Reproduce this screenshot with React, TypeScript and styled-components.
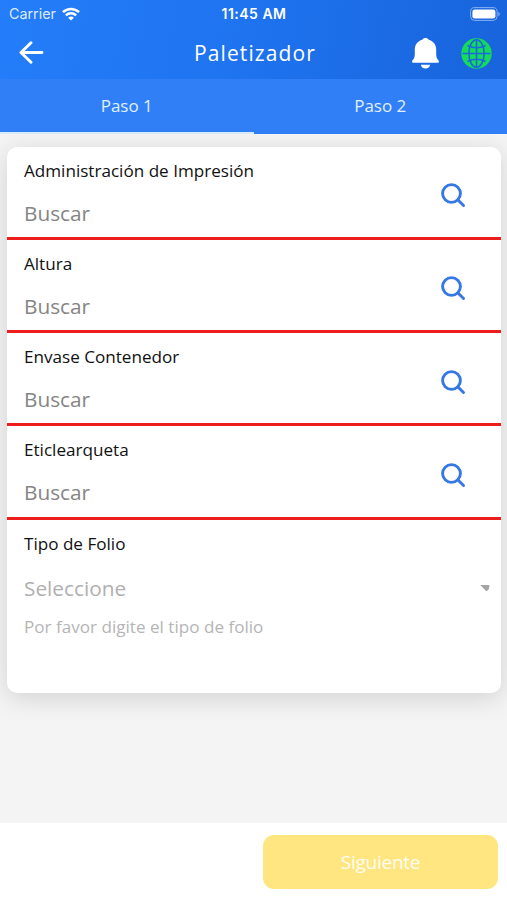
import React from "react";
import styled, { createGlobalStyle } from "styled-components";

const GlobalStyle = createGlobalStyle`
  * { box-sizing: border-box; }
  body { margin: 0; background: #f4f4f4; font-family: "Open Sans", "Noto Sans", sans-serif; }
  button, input { font: inherit; }
`;

const Screen = styled.div`
  width: 507px;
  height: 900px;
  display: flex;
  flex-direction: column;
  overflow: hidden;
  background: #f4f4f4;
`;

const Header = styled.header`
  height: 79px;
  flex: none;
  color: #fff;
  background: linear-gradient(100deg, #247dfa 0%, #1f74f0 45%, #1864dc 100%);
`;

const StatusBar = styled.div`
  height: 27px;
  display: grid;
  grid-template-columns: 1fr auto 1fr;
  align-items: center;
  padding: 0 6px 0 9px;
  font: 14px/27px Inter, sans-serif;
`;

const Carrier = styled.div`
  display: flex;
  align-items: center;
  gap: 6px;
  font-size: 14.3px;
  color: #dceaff;
`;

const Clock = styled.div`
  margin-right: 2px;
  font-size: 14px;
  font-weight: 600;
  letter-spacing: 0.5px;
`;

const Battery = styled.div`
  display: flex;
  justify-content: flex-end;
`;

const NavBar = styled.div`
  height: 52px;
  display: grid;
  grid-template-columns: 1fr auto 1fr;
  align-items: center;
  padding: 0 15px 0 18px;
`;

const Title = styled.h1`
  margin: 0;
  font-size: 21px;
  line-height: 30px;
  font-weight: 450;
  letter-spacing: 1.1px;
`;

const IconButton = styled.button`
  display: flex;
  padding: 0;
  border: 0;
  background: none;
  color: inherit;
`;

const Actions = styled.div`
  display: flex;
  justify-content: flex-end;
  align-items: center;
  gap: 22px;
`;

const Tabs = styled.div`
  display: flex;
  flex: none;
  height: 55px;
  background: #307ff7;
`;

const Tab = styled.button<{ $active?: boolean }>`
  flex: 1;
  border: 0;
  border-bottom: 2px solid ${(p) => (p.$active ? "#d9ecfd" : "#307ff7")};
  padding: 0;
  background: none;
  color: #e2efff;
  font-size: 17px;
`;

const Content = styled.main`
  flex: 1;
  padding: 12.6px 6px 0 7px;
`;

const Card = styled.section`
  height: 546.5px;
  background: #fff;
  border-radius: 10px;
  box-shadow: 0 5px 26px rgba(0, 0, 0, 0.14);
`;

const Field = styled.div`
  height: 93.25px;
  display: flex;
  align-items: center;
  justify-content: space-between;
  padding: 6px 35px 0 17px;
  border-bottom: 3px solid #ee1d1d;
`;

const FieldText = styled.div`
  align-self: flex-start;
`;

const Label = styled.div`
  font-size: 17.1px;
  line-height: 35px;
  color: #111;
`;

const Value = styled.div<{ $color: string }>`
  font-size: 20.8px;
  line-height: 50px;
  color: ${(p) => p.$color};
`;

const SelectField = styled.div`
  padding: 6px 11px 0 17px;
`;

const SelectRow = styled.div`
  display: flex;
  align-items: center;
  justify-content: space-between;
  height: 55px;
`;

const Hint = styled.div`
  font-size: 17.1px;
  line-height: 22px;
  color: #b5b5b5;
`;

const Footer = styled.footer`
  height: 77px;
  flex: none;
  display: flex;
  justify-content: flex-end;
  padding: 12px 9px 0;
  background: #fff;
`;

const NextButton = styled.button`
  width: 235px;
  height: 54px;
  border: 0;
  border-radius: 11px;
  background: #ffe680;
  color: #fffdf2;
  font-size: 19px;
  letter-spacing: -0.25px;
`;

const WifiIcon = () => (
  <svg width="18" height="14" viewBox="0 0 18 14" fill="none" stroke="#fff" strokeWidth="2.5">
    <path d="M1 5.200a11.400 11.400 0 0 1 16 0" />
    <path d="M3.900 8.400a7.300 7.300 0 0 1 10.200 0" />
    <path d="M9 13.600 6.100 10.800a4.200 4.200 0 0 1 5.800 0Z" fill="#fff" stroke="none" />
  </svg>
);

const BatteryIcon = () => (
  <svg width="31" height="14" viewBox="0 0 31 14">
    <rect x=".6" y=".6" width="26.5" height="12.8" rx="4" fill="none" stroke="#86b1f4" />
    <rect x="2.4" y="2.4" width="23" height="9.2" rx="2.4" fill="#fff" />
    <path d="M28.3 4.8c2 .8 2 3.600 0 4.400Z" fill="#86b1f4" />
  </svg>
);

const BackIcon = () => (
  <svg width="27" height="24" viewBox="0 0 27 24" fill="none" stroke="#fff" strokeWidth="2.9" strokeLinecap="round" strokeLinejoin="round">
    <path d="M24 11.500H3M13 1.700 3 11.500l10 9.800" />
  </svg>
);

const BellIcon = () => (
  <svg width="27" height="31" viewBox="0 0 27 31" fill="#fff">
    <path d="M13.500 0c1.500 0 2.600.6 3.200 1.700 4.700 1.300 7.500 5 7.500 9.600v4.400c0 3.200.5 4.700 2.200 6.500.9 1 .6 2.500-.8 2.500h-24.200c-1.400 0-1.700-1.500-.8-2.500 1.700-1.800 2.200-3.300 2.200-6.500v-4.400c0-4.600 2.800-8.300 7.500-9.600.6-1.100 1.700-1.700 3.200-1.700Z" />
    <path d="M8.800 26.800h9.400c-.4 2.300-2.200 3.800-4.700 3.800s-4.300-1.500-4.700-3.800Z" />
  </svg>
);

const GlobeIcon = () => (
  <svg width="31" height="31" viewBox="0 0 31 31">
    <circle cx="15.500" cy="15.500" r="15.200" fill="#16da5c" />
    <g fill="none" stroke="#1a67df" strokeWidth="1.600">
      <path d="M15.500 1.500v28M1.500 15.500h28M6.500 7.500c5.500 2.800 12.500 2.800 18 0M6.500 23.500c5.500-2.800 12.500-2.800 18 0" />
      <ellipse cx="15.500" cy="15.500" rx="7.600" ry="13.800" />
    </g>
  </svg>
);

const SearchIcon = () => (
  <svg width="25" height="25" viewBox="0 0 25 25" fill="none" stroke="#3578e5" strokeWidth="2.900" strokeLinecap="round">
    <circle cx="10.500" cy="11.500" r="8.900" />
    <path d="m17 18 5.500 5.500" />
  </svg>
);

const CaretIcon = () => (
  <svg width="10" height="9" viewBox="0 0 10 9">
    <path d="M.3 1h8.300q1 0 .8 1L8.800 5.200 6.900 7H6Z" fill="#a5a5a5" />
  </svg>
);

const searchFields = ["Administración de Impresión", "Altura", "Envase Contenedor", "Eticlearqueta"];

export default function App() {
  return (
    <Screen>
      <GlobalStyle />
      <Header>
        <StatusBar>
          <Carrier>Carrier <WifiIcon /></Carrier>
          <Clock>11:45 AM</Clock>
          <Battery><BatteryIcon /></Battery>
        </StatusBar>
        <NavBar>
          <IconButton aria-label="Volver"><BackIcon /></IconButton>
          <Title>Paletizador</Title>
          <Actions>
            <IconButton aria-label="Notificaciones"><BellIcon /></IconButton>
            <IconButton aria-label="Idioma"><GlobeIcon /></IconButton>
          </Actions>
        </NavBar>
      </Header>
      <Tabs>
        <Tab $active>Paso 1</Tab>
        <Tab>Paso 2</Tab>
      </Tabs>
      <Content>
        <Card>
          {searchFields.map((name) => (
            <Field key={name}>
              <FieldText>
                <Label>{name}</Label>
                <Value $color="#858585">Buscar</Value>
              </FieldText>
              <IconButton aria-label={`Buscar ${name}`}><SearchIcon /></IconButton>
            </Field>
          ))}
          <SelectField>
            <Label>Tipo de Folio</Label>
            <SelectRow>
              <Value $color="#b0b0b0">Seleccione</Value>
              <CaretIcon />
            </SelectRow>
            <Hint>Por favor digite el tipo de folio</Hint>
          </SelectField>
        </Card>
      </Content>
      <Footer>
        <NextButton>Siguiente</NextButton>
      </Footer>
    </Screen>
  );
}
